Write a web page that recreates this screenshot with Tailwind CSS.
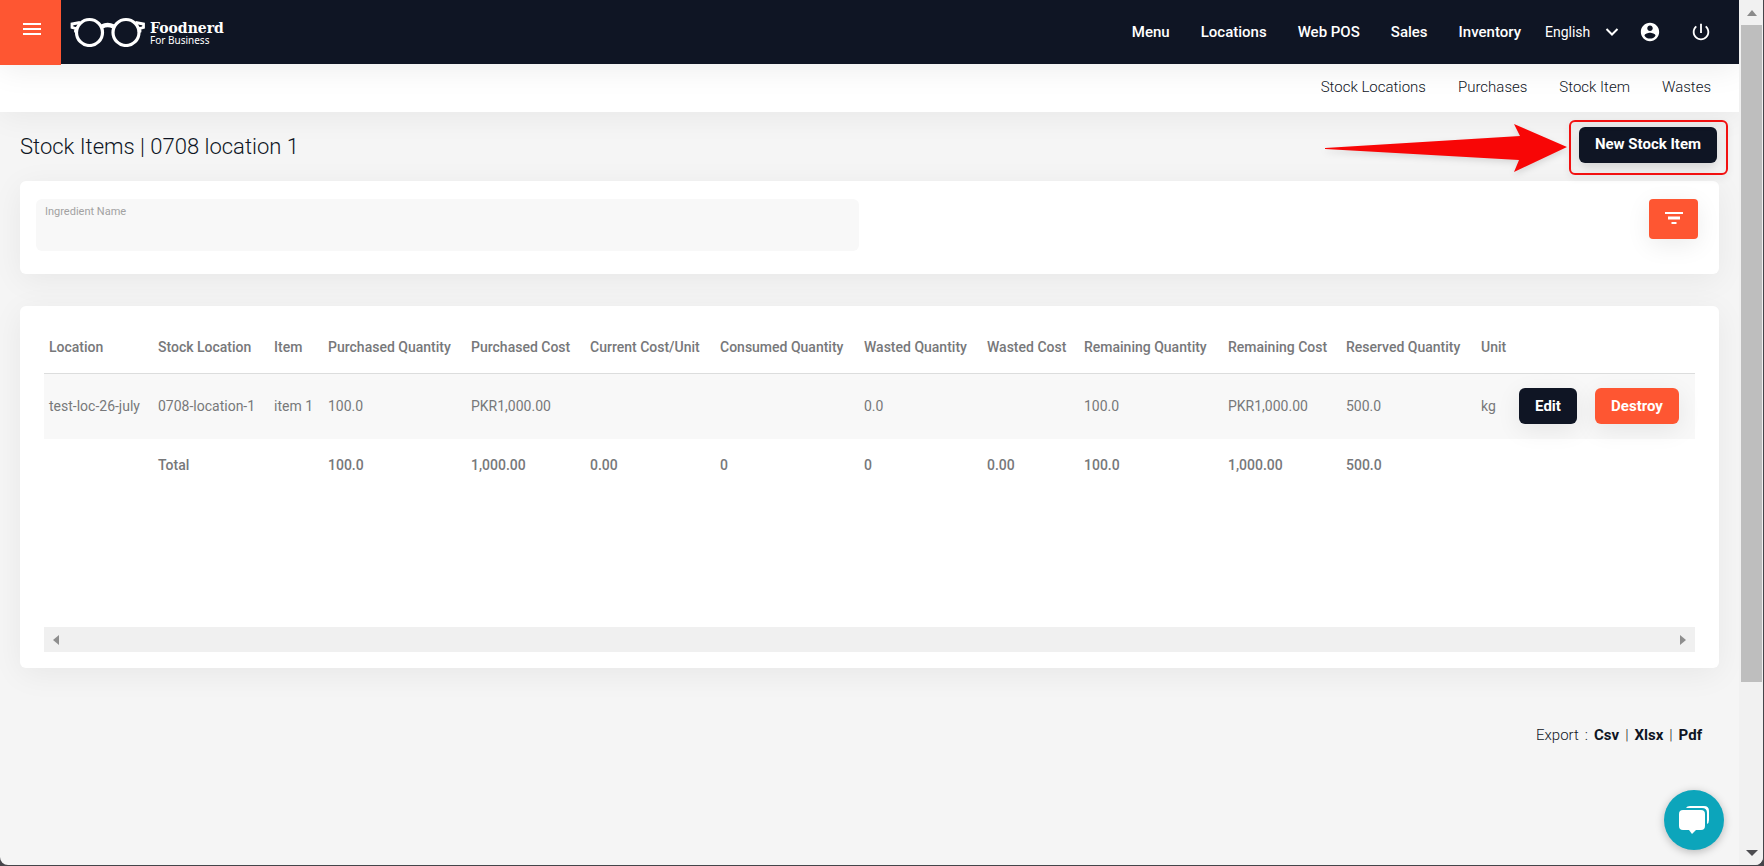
<!DOCTYPE html>
<html lang="en">
<head>
<meta charset="utf-8">
<meta name="viewport" content="width=device-width, initial-scale=1">
<title>Stock Items | Foodnerd For Business</title>
<script src="https://cdn.jsdelivr.net/npm/@tailwindcss/browser@4"></script>
</head>
<body class="bg-[#45454a] font-['Roboto',sans-serif] text-[#0f1524]">
<div class="flex h-screen overflow-hidden pr-px pb-px">
<div class="relative flex min-w-0 flex-1 overflow-hidden rounded-b-lg bg-[#f5f5f5]">
  <div class="min-w-0 flex-1 overflow-hidden">
    <header class="relative z-20 flex h-16 items-center bg-[#0f1524] text-white shadow-[0_4px_32px_rgba(0,0,0,0.08)]">
      <button type="button" aria-label="Open menu" class="flex h-[65px] w-[61px] shrink-0 items-center justify-center self-start bg-[#fe5632] pt-px pb-2 pl-0.5">
        <svg class="h-3 w-[18px]" viewBox="0 0 18 12" fill="#fff"><path d="M0 0h18v2H0zM0 5h18v2H0zM0 10h18v2H0z"/></svg>
      </button>
      <a href="#" class="ml-2 flex items-center gap-1">
        <svg class="h-[30px] w-[77px]" viewBox="0 0 77 30" fill="none" stroke="#fff">
          <circle cx="20.500" cy="15.500" r="13" stroke-width="3.200"/><circle cx="57" cy="15.500" r="13" stroke-width="3.200"/>
          <path d="M33 9.500Q38.500 6.500 44.500 9.500" stroke-width="4.500"/>
          <path d="M11 5.500L3 7v3.500l3.500.8v3L8.500 15M66.500 5.500L74.500 7v3.500l-3.500.8v3L69 15" stroke-width="2.800"/>
        </svg>
        <span class="flex flex-col">
          <span class="font-['DejaVu_Serif',serif] text-sm leading-4 font-bold">Foodnerd</span>
          <span class="font-['Noto_Sans',sans-serif] text-[10px] leading-2">For Business</span>
        </span>
      </a>
      <nav class="ml-auto flex items-center gap-[31px] text-[15px] font-medium">
        <a href="#">Menu</a><a href="#">Locations</a><a href="#">Web POS</a><a href="#">Sales</a><a href="#">Inventory</a>
      </nav>
      <div class="relative ml-6 flex items-center">
        <select aria-label="Language" class="w-[74px] appearance-none bg-[#0f1524] text-sm text-white"><option>English</option></select>
        <svg class="pointer-events-none absolute right-0 h-2 w-3.5" viewBox="0 0 14 8" fill="none" stroke="#fff" stroke-width="2"><path d="M1.500 1L7 6.500 12.500 1"/></svg>
      </div>
      <a href="#" aria-label="Account" class="ml-5"><svg class="size-[22px]" viewBox="0 0 24 24" fill="#fff"><path d="M12 2C6.480 2 2 6.480 2 12s4.480 10 10 10 10-4.480 10-10S17.520 2 12 2zm0 3c1.660 0 3 1.340 3 3s-1.340 3-3 3-3-1.340-3-3 1.340-3 3-3zm0 14.200c-2.500 0-4.710-1.280-6-3.220.030-1.990 4-3.080 6-3.080 1.990 0 5.970 1.090 6 3.080-1.290 1.940-3.500 3.220-6 3.220z"/></svg></a>
      <a href="#" aria-label="Log out" class="mr-[27px] ml-[29px]"><svg class="size-[22px]" viewBox="0 0 24 24" fill="#fff"><path d="M13 3h-2v10h2V3zm4.830 2.170l-1.420 1.420C17.990 7.860 19 9.810 19 12c0 3.870-3.130 7-7 7s-7-3.130-7-7c0-2.190 1.010-4.140 2.580-5.420L6.170 5.170C4.230 6.820 3 9.260 3 12c0 4.970 4.030 9 9 9s9-4.030 9-9c0-2.740-1.230-5.180-3.170-6.830z"/></svg></a>
    </header>
    <nav class="relative z-10 flex h-12 items-center justify-end gap-8 bg-white pr-7 pb-px text-[15px] font-light text-[#0f1524] shadow-[0_4px_32px_rgba(0,0,0,0.06)]">
      <a href="#">Stock Locations</a><a href="#">Purchases</a><a href="#">Stock Item</a><a href="#">Wastes</a>
    </nav>

    <main class="pr-5 pl-5">
      <div class="flex h-[69px] items-center justify-between">
        <h1 class="text-[22px] font-light">Stock Items | 0708 location 1</h1>
        <div class="relative z-10 mr-0.5 mb-1">
          <button type="button" class="h-9 rounded-md bg-[#0f1524] px-4 text-[15px] font-bold text-white shadow-[0_4px_12px_rgba(0,0,0,0.15)]">New Stock Item</button>
          <!-- Callout frame and arrow around the button -->
          <div class="pointer-events-none absolute -top-[7px] -right-[11px] -bottom-3 -left-2.5 rounded-md border-2 border-[#f21010] drop-shadow-md"></div>
          <svg class="pointer-events-none absolute -top-1 right-full mr-[11px] h-[50px] w-[243px] drop-shadow-md" viewBox="0 0 243 50" fill="#f80606"><path d="M0 25L195 13 189 1 242 24 189 49 194 37 0 26z"/></svg>
        </div>
      </div>

      <section class="flex h-[93px] items-start justify-between rounded-md bg-white pt-[18px] pr-[21px] pl-4 shadow-[0_6px_32px_rgba(0,0,0,0.06)]">
        <div class="relative h-13 w-1/2 pr-2">
          <label for="ingredient" class="absolute top-[7px] left-[9px] text-[11px] leading-3 text-[#a2a2a2]">Ingredient Name</label>
          <input id="ingredient" type="text" class="h-13 w-full rounded-md bg-[#f8f8f8] px-2 pt-4 text-sm outline-none">
        </div>
        <button type="button" aria-label="Filter" class="flex h-10 w-[49px] items-center justify-center rounded bg-[#fe5632] pb-0.5 shadow-[0_6px_24px_rgba(0,0,0,0.08)]">
          <svg class="h-3 w-[18px]" viewBox="0 0 18 12" fill="#fff"><path d="M0 0h18v2H0zM3 4.500h12v3H3zM6.500 10h5v2h-5z"/></svg>
        </button>
      </section>

      <section class="mt-8 rounded-md bg-white px-6 pt-4 pb-4 shadow-[0_6px_32px_rgba(0,0,0,0.06)]">
        <div class="h-[305px]">
          <table class="w-full table-fixed text-left text-sm whitespace-nowrap text-[#77787a] [&_td]:px-[5px] [&_th]:px-[5px] [&_th]:font-medium">
            <colgroup>
              <col class="w-[109px]"><col class="w-[116px]"><col class="w-[54px]"><col class="w-[143px]"><col class="w-[119px]"><col class="w-[130px]"><col class="w-[144px]"><col class="w-[123px]"><col class="w-[97px]"><col class="w-[144px]"><col class="w-[118px]"><col class="w-[135px]"><col class="w-[38px]"><col class="w-[181px]">
            </colgroup>
            <thead>
              <tr class="h-[51px] border-b border-[#dcdddd]">
                <th>Location</th><th>Stock Location</th><th>Item</th><th>Purchased Quantity</th><th>Purchased Cost</th><th>Current Cost/Unit</th><th>Consumed Quantity</th><th>Wasted Quantity</th><th>Wasted Cost</th><th>Remaining Quantity</th><th>Remaining Cost</th><th>Reserved Quantity</th><th>Unit</th><td></td>
              </tr>
            </thead>
            <tbody>
              <tr class="h-[66px] bg-[#f8f8f8]">
                <td>test-loc-26-july</td><td>0708-location-1</td><td>item 1</td><td>100.0</td><td>PKR1,000.00</td><td></td><td></td><td>0.0</td><td></td><td>100.0</td><td>PKR1,000.00</td><td>500.0</td><td>kg</td>
                <td><div class="flex gap-[18px]">
                  <button type="button" class="h-9 w-[58px] rounded-md bg-[#0f1524] text-[15px] font-bold text-white shadow-[0_6px_24px_rgba(0,0,0,0.08)]">Edit</button>
                  <button type="button" class="h-9 w-[84px] rounded-md bg-[#fe5632] text-[15px] font-bold text-white shadow-[0_6px_24px_rgba(0,0,0,0.08)]">Destroy</button>
                </div></td>
              </tr>
            </tbody>
            <tfoot>
              <tr class="h-[51px]">
                <td></td><th>Total</th><td></td><th>100.0</th><th>1,000.00</th><th>0.00</th><th>0</th><th>0</th><th>0.00</th><th>100.0</th><th>1,000.00</th><th>500.0</th><td></td><td></td>
              </tr>
            </tfoot>
          </table>
        </div>
        <div class="flex h-[25px] items-center justify-between bg-[#f0f0f0] px-[9px]">
          <svg class="h-2.5 w-1.5" viewBox="0 0 6 10" fill="#8e8e8e"><path d="M6 0v10L0 5z"/></svg>
          <svg class="h-2.5 w-1.5" viewBox="0 0 6 10" fill="#8e8e8e"><path d="M0 0v10l6-5z"/></svg>
        </div>
      </section>

      <p class="mt-[55px] mr-[17px] flex justify-end gap-1.5 text-[15px] leading-6 font-light text-[#0f1524]">
        <span>Export</span><span>:</span><a href="#" class="font-bold">Csv</a><span>|</span><a href="#" class="font-bold">Xlsx</a><span>|</span><a href="#" class="font-bold">Pdf</a>
      </p>
    </main>
  </div>

  <!-- Page scrollbar -->
  <div class="flex w-6 shrink-0 flex-col items-center bg-[#f1f1f1] px-px pl-0.5">
    <div class="flex h-[25px] shrink-0 items-center justify-center"><svg class="h-1.5 w-2.5" viewBox="0 0 10 6" fill="#8b8b8b"><path d="M0 6h10L5 0z"/></svg></div>
    <div class="h-[657px] w-full bg-[#bebebe]"></div>
    <svg class="mt-auto mb-[9px] h-1.5 w-3" viewBox="0 0 12 6" fill="#4c4c50"><path d="M0 0h12L6 6z"/></svg>
  </div>

  <button type="button" aria-label="Open chat" class="absolute right-[39px] bottom-[15px] flex size-[60px] items-center justify-center rounded-full bg-[#0ca5bb] shadow-[0_2px_8px_rgba(0,0,0,0.25)]">
    <svg class="h-[30px] w-[31px]" viewBox="0 0 31 30" fill="#fff"><path d="M4 5h18q4 0 4 4v12q0 4-4 4h-5l-4 4-3-4H4q-4 0-4-4V9q0-4 4-4z"/><path d="M7 3q1-2 4-2h14q5 0 5 5v9q0 3-2 4V8q0-5-5-5z"/></svg>
  </button>
</div>
</div>
</body>
</html>
